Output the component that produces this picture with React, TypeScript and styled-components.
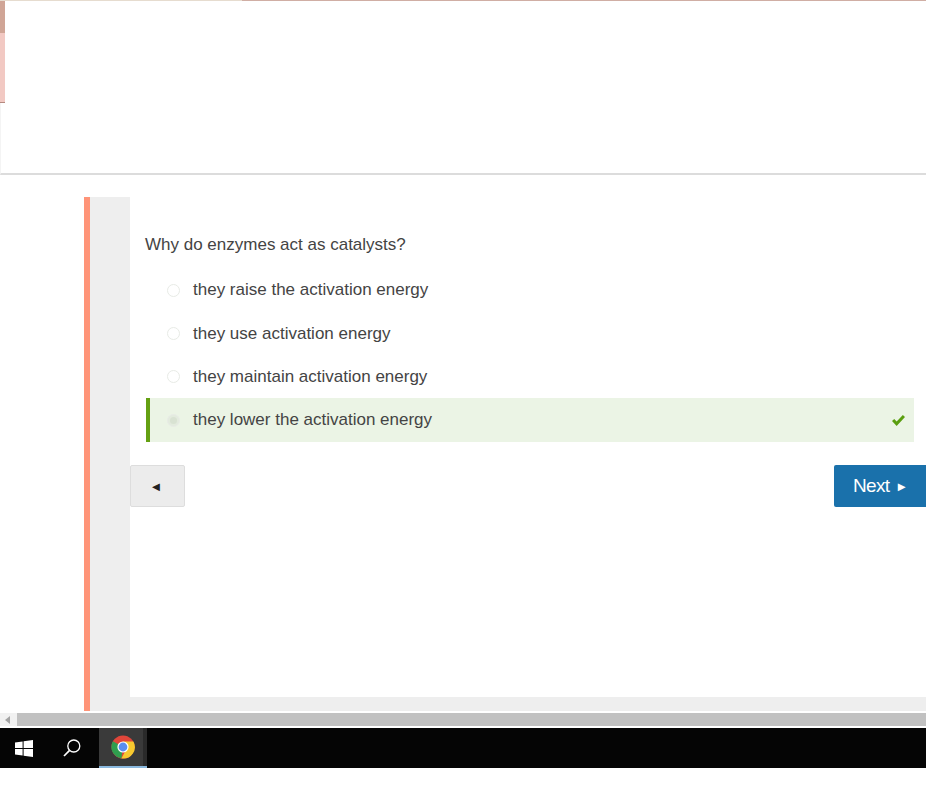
import styled, { createGlobalStyle } from "styled-components";

const GlobalStyle = createGlobalStyle`
  html, body {
    margin: 0;
    padding: 0;
    background: #fff;
    overflow: hidden;
  }
  body {
    font-family: "Liberation Sans", Arial, sans-serif;
  }
`;

const ANSWERS = [
  { text: "they raise the activation energy", correct: false, height: 44 },
  { text: "they use activation energy", correct: false, height: 43 },
  { text: "they maintain activation energy", correct: false, height: 43 },
  { text: "they lower the activation energy", correct: true, height: 44 },
];

export default function App() {
  return (
    <Page>
      <GlobalStyle />
      <Header>
        <TopStrip>
          <StripPale />
          <StripDark />
        </TopStrip>
        <SideSliver>
          <SliverDark />
          <SliverLight />
        </SideSliver>
      </Header>
      <Main>
        <Panel>
          <Gutter />
          <Content>
            <Question>Why do enzymes act as catalysts?</Question>
            <Answers>
              {ANSWERS.map((a) => (
                <Answer key={a.text} $correct={a.correct} $height={a.height}>
                  <Radio $checked={a.correct} />
                  <AnswerText>{a.text}</AnswerText>
                  {a.correct && (
                    <Check viewBox="0 0 16 14" aria-hidden="true">
                      <path d="M1 7.6 3.4 5.3 6 8 12.7 1 15 3.3 6 13z" fill="#5a9e0f" />
                    </Check>
                  )}
                </Answer>
              ))}
            </Answers>
            <Nav>
              <BackButton aria-label="Back">◄</BackButton>
              <NextButton>
                Next<NextArrow>►</NextArrow>
              </NextButton>
            </Nav>
          </Content>
        </Panel>
      </Main>
      <ScrollBar>
        <ScrollArrow />
        <ScrollThumb />
      </ScrollBar>
      <Taskbar>
        <TaskIcon>
          <svg width="18" height="17" viewBox="0 0 18 17" aria-hidden="true">
            <path d="M0 2.5 7.6 1.4V8H0zM8.6 1.2 18 0V8H8.6zM0 9H7.6V15.6L0 14.5zM8.6 9H18V17L8.6 15.8z" fill="#fff" />
          </svg>
        </TaskIcon>
        <SearchIcon>
          <svg width="18" height="18" viewBox="0 0 18 18" aria-hidden="true">
            <circle cx="10.8" cy="7" r="6" fill="none" stroke="#fff" strokeWidth="1.3" />
            <path d="M6.6 11.4 1 17" stroke="#fff" strokeWidth="1.7" />
          </svg>
        </SearchIcon>
        <ChromeTab>
          <svg width="24" height="24" viewBox="0 0 24 24" aria-hidden="true">
            <circle cx="12" cy="12" r="11.5" fill="#e0463a" />
            <path d="M12 12 1.9 6.2A11.5 11.5 0 0 0 10.4 23.4z" fill="#2f9e4f" />
            <path d="M12 6.5H22.4A11.5 11.5 0 0 1 10.4 23.4L15.5 14z" fill="#f7c92f" />
            <circle cx="12" cy="12" r="5.6" fill="#fff" />
            <circle cx="12" cy="12" r="4.4" fill="#5a8df0" />
          </svg>
          <TabEdge />
        </ChromeTab>
      </Taskbar>
    </Page>
  );
}

const Page = styled.div`
  display: flex;
  flex-direction: column;
  width: 926px;
  height: 790px;
  overflow: hidden;
  background: #fff;
`;

const Header = styled.header`
  position: relative;
  flex: none;
  box-sizing: border-box;
  height: 175px;
  border-left: 1px solid #f4f4f4;
  border-bottom: 2px solid #dcdcdc;
  background: #fff;
`;

const TopStrip = styled.div`
  position: absolute;
  top: 0;
  left: -1px;
  right: 0;
  display: flex;
  height: 1px;
`;

const StripPale = styled.div`
  width: 242px;
  background: #e6dccf;
`;

const StripDark = styled.div`
  flex: 1;
  background: #d0aea4;
`;

const SideSliver = styled.div`
  position: absolute;
  top: 1px;
  left: -1px;
  display: flex;
  flex-direction: column;
  width: 5px;
  height: 102px;
`;

const SliverDark = styled.div`
  height: 32px;
  background: #d0a596;
`;

const SliverLight = styled.div`
  flex: 1;
  background: #f2c9c3;
  border-bottom: 1px solid #b58a80;
`;

const Main = styled.main`
  flex: none;
  height: 538px;
  padding: 22px 0 0 84px;
  box-sizing: border-box;
`;

const Panel = styled.section`
  display: flex;
  height: 514px;
  box-sizing: border-box;
  padding-bottom: 14px;
  border-left: 6px solid #ff9478;
  background: #eeeeee;
`;

const Gutter = styled.div`
  flex: none;
  width: 40px;
`;

const Content = styled.div`
  flex: 1;
  background: #fff;
  padding-top: 38px;
`;

const Question = styled.p`
  margin: 0 0 0 15px;
  font-size: 17px;
  line-height: 20px;
  color: #444;
`;

const Answers = styled.div`
  display: flex;
  flex-direction: column;
  margin: 13px 12px 0 16px;
`;

const Answer = styled.div<{ $correct: boolean; $height: number }>`
  display: flex;
  align-items: center;
  height: ${(p) => p.$height}px;
  box-sizing: border-box;
  padding: 0 8px 0 ${(p) => (p.$correct ? "17px" : "21px")};
  border-left: ${(p) => (p.$correct ? "4px solid #64a012" : "none")};
  background: ${(p) => (p.$correct ? "#ebf4e5" : "transparent")};
`;

const Radio = styled.span<{ $checked: boolean }>`
  position: relative;
  flex: none;
  box-sizing: border-box;
  width: 13px;
  height: 13px;
  border-radius: 50%;
  border: 1px solid #e8ebe6;
  background: ${(p) => (p.$checked ? "#e3ebde" : "#fff")};

  &::after {
    content: "";
    display: ${(p) => (p.$checked ? "block" : "none")};
    position: absolute;
    inset: 2px;
    border-radius: 50%;
    background: #d8e2d2;
  }
`;

const AnswerText = styled.span`
  flex: 1;
  margin-left: 13px;
  font-size: 17px;
  color: #444;
`;

const Check = styled.svg`
  flex: none;
  width: 15px;
  height: 13px;
  margin-top: 1px;
`;

const Nav = styled.div`
  display: flex;
  justify-content: space-between;
  margin-top: 23px;
`;

const BackButton = styled.button`
  box-sizing: border-box;
  width: 55px;
  height: 42px;
  padding: 0 3px 0 0;
  border: 1px solid #dddddd;
  border-radius: 2px;
  background: #ececec;
  color: #222;
  font-family: "Liberation Sans", Arial, sans-serif;
  font-size: 13px;
`;

const NextButton = styled.button`
  display: flex;
  align-items: center;
  box-sizing: border-box;
  width: 92px;
  height: 42px;
  padding: 0 0 0 19px;
  border: none;
  border-radius: 2px 0 0 2px;
  background: #1a71ab;
  color: #fff;
  font-family: "Liberation Sans", Arial, sans-serif;
  font-size: 19px;
  letter-spacing: -0.7px;
`;

const NextArrow = styled.span`
  font-size: 13px;
  letter-spacing: 0;
  margin-left: 6px;
`;

const ScrollBar = styled.div`
  flex: none;
  display: flex;
  height: 13px;
  background: #f1f1f1;
`;

const ScrollArrow = styled.div`
  position: relative;
  flex: none;
  width: 17px;

  &::after {
    content: "";
    position: absolute;
    top: 3px;
    left: 5px;
    border-style: solid;
    border-width: 4px 5px 4px 0;
    border-color: transparent #a3a3a3 transparent transparent;
  }
`;

const ScrollThumb = styled.div`
  flex: 1;
  background: #c1c1c1;
`;

const Taskbar = styled.footer`
  flex: none;
  display: flex;
  height: 40px;
  margin-top: 2px;
  background: #050505;
`;

const TaskIcon = styled.div`
  display: flex;
  align-items: center;
  justify-content: center;
  width: 48px;
  height: 40px;
`;

const SearchIcon = styled(TaskIcon)`
  width: 51px;
  padding-right: 3px;
  box-sizing: border-box;
`;

const ChromeTab = styled.div`
  position: relative;
  display: flex;
  align-items: center;
  justify-content: center;
  box-sizing: border-box;
  width: 48px;
  height: 40px;
  background: #3a3a3a;
  border-bottom: 2px solid #8ab8de;
`;

const TabEdge = styled.span`
  position: absolute;
  top: 0;
  right: 0;
  bottom: 0;
  width: 4px;
  background: #2a2a2a;
`;
